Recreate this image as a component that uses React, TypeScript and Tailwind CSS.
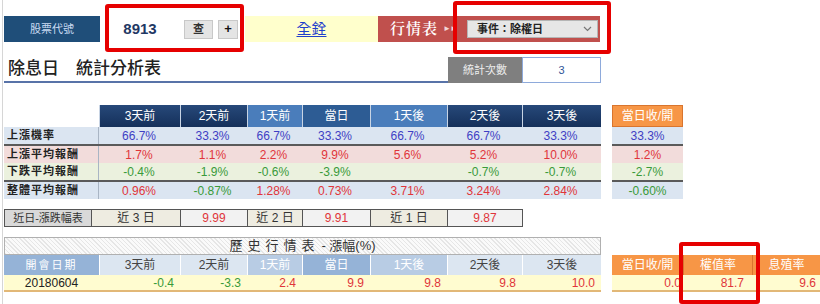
import React from "react";

const COLS = [81, 67, 55, 68, 77, 75, 79];
const HEADS = ["3天前", "2天前", "1天前", "當日", "1天後", "2天後", "3天後"];

const headBg = [
  "bg-gradient-to-b from-[#27497a] to-[#15305a]",
  "bg-gradient-to-b from-[#27497a] to-[#15305a]",
  "bg-[#4a7dbb]",
  "bg-[#2d5c94]",
  "bg-[#4a7dbb]",
  "bg-gradient-to-b from-[#27497a] to-[#15305a]",
  "bg-gradient-to-b from-[#27497a] to-[#15305a]",
];

const BLUE = "text-[#3f3fc4]";
const RED = "text-[#e0353a]";
const GREEN = "text-[#3a9a3a]";

type Row = {
  label: string;
  bg: string;
  border: string;
  values: [string, string][];
  side: [string, string];
};

const rows: Row[] = [
  {
    label: "上漲機率",
    bg: "bg-[#dbe5f1]",
    border: "border-b-2 border-[#5a5a5a]",
    values: [
      ["66.7%", BLUE], ["33.3%", BLUE], ["66.7%", BLUE], ["33.3%", BLUE],
      ["66.7%", BLUE], ["66.7%", BLUE], ["33.3%", BLUE],
    ],
    side: ["33.3%", BLUE],
  },
  {
    label: "上漲平均報酬",
    bg: "bg-[#f2dcdb]",
    border: "",
    values: [
      ["1.7%", RED], ["1.1%", RED], ["2.2%", RED], ["9.9%", RED],
      ["5.6%", RED], ["5.2%", RED], ["10.0%", RED],
    ],
    side: ["1.2%", RED],
  },
  {
    label: "下跌平均報酬",
    bg: "bg-[#ebf1de]",
    border: "border-b-2 border-[#5a5a5a]",
    values: [
      ["-0.4%", GREEN], ["-1.9%", GREEN], ["-0.6%", GREEN], ["-3.9%", GREEN],
      ["", GREEN], ["-0.7%", GREEN], ["-0.7%", GREEN],
    ],
    side: ["-2.7%", GREEN],
  },
  {
    label: "整體平均報酬",
    bg: "bg-[#dbe5f1]",
    border: "",
    values: [
      ["0.96%", RED], ["-0.87%", GREEN], ["1.28%", RED], ["0.73%", RED],
      ["3.71%", RED], ["3.24%", RED], ["2.84%", RED],
    ],
    side: ["-0.60%", GREEN],
  },
];

const histHead = [
  { t: "3天前", c: "bg-[#dce6f1] text-[#444]" },
  { t: "2天前", c: "bg-[#dce6f1] text-[#444]" },
  { t: "1天前", c: "bg-[#b8cce4] text-white" },
  { t: "當日", c: "bg-[#95b3d7] text-white" },
  { t: "1天後", c: "bg-[#b8cce4] text-white" },
  { t: "2天後", c: "bg-[#dce6f1] text-[#444]" },
  { t: "3天後", c: "bg-[#dce6f1] text-[#444]" },
];
const histVals: [string, string][] = [
  ["-0.4", GREEN], ["-3.3", GREEN], ["2.4", RED], ["9.9", RED],
  ["9.8", RED], ["9.8", RED], ["10.0", RED],
];

function Chevron() {
  return (
    <svg width="9" height="6" viewBox="0 0 9 6" fill="none">
      <path d="M1 1l3.5 3.5L8 1" stroke="#777" strokeWidth="1.2" />
    </svg>
  );
}

export default function App() {
  return (
    <div className="relative w-[820px] h-[304px] overflow-hidden bg-white font-['Liberation_Sans','Noto_Sans_CJK_TC',sans-serif]">
      <div className="ml-[2px] h-full border-l border-[#d6d6d6] pl-[1px] pt-[16px]">
        {/* Top bar */}
        <div className="flex h-[26px]">
          <div className="flex w-[96px] items-center justify-center bg-[#1f4e79] text-[11px] text-[#c9dbf2]">
            股票代號
          </div>
          <div className="flex w-[145px] items-center bg-white">
            <div className="w-[80px] text-center text-[15px] font-bold text-[#1f3864]">8913</div>
            <div className="ml-[4px] flex h-[19px] w-[29px] items-center justify-center border border-[#c8c8c8] bg-[#e4e4e4] text-[11px] font-bold text-[#333]">
              查
            </div>
            <div className="ml-[5px] flex h-[19px] w-[20px] items-center justify-center border border-[#c8c8c8] bg-[#e4e4e4] text-[13px] font-bold text-[#111]">
              +
            </div>
          </div>
          <div className="flex w-[133px] items-center justify-center bg-[#ffffcc] text-[15px] text-[#1f3fcc] underline underline-offset-2">
            全銓
          </div>
          <div className="flex w-[222px] items-center bg-[#c0504d]">
            <div className="flex w-[89px] items-center pl-[12px] text-white">
              <span className="font-['Liberation_Serif','Noto_Serif_CJK_TC','Noto_Sans_CJK_TC',serif] text-[15px] font-semibold tracking-[1px]">
                行情表
              </span>
              <span className="ml-[5px] text-[8px] tracking-[-1px] text-[#f3d6d6]">►►</span>
            </div>
            <div className="flex h-[18px] w-[131px] items-center justify-between border border-[#b5b5b5] bg-[#e6e6e6] pl-[9px] pr-[5px] text-[11px] font-bold text-[#222]">
              <span>事件：除權日</span>
              <Chevron />
            </div>
          </div>
        </div>

        {/* Title row */}
        <div className="mt-[15px] flex h-[26px] w-[597px]">
          <div className="flex flex-1 items-center border-b-2 border-[#5873a8] pl-[4px] text-[17px] font-medium text-[#222]">
            除息日　統計分析表
          </div>
          <div className="flex w-[74px] items-center justify-center bg-[#7f7f7f] text-[11px] text-[#eeeeee]">
            統計次數
          </div>
          <div className="flex w-[79px] items-center justify-center border border-[#8eaadb] text-[11px] text-[#2f5597]">
            3
          </div>
        </div>

        {/* Stats table */}
        <div className="mt-[22px] flex">
          <div className="w-[597px]">
            <div className="flex h-[22px]">
              <div className="w-[95px]" />
              {HEADS.map((h, i) => (
                <div
                  key={h}
                  style={{ width: COLS[i] }}
                  className={`flex items-center justify-center border-l border-[#c8d4e4] text-[12px] text-white ${headBg[i]}`}
                >
                  {h}
                </div>
              ))}
            </div>
            {rows.map((r) => (
              <div key={r.label} className={`flex h-[17px] box-content ${r.bg} ${r.border}`}>
                <div className="flex w-[95px] items-center border-r border-[#a9b5c4] pl-[3px] text-[11px] font-semibold tracking-[1px] text-[#222]">
                  {r.label}
                </div>
                {r.values.map(([v, c], i) => (
                  <div
                    key={i}
                    style={{ width: COLS[i] - (i === 0 ? 1 : 0) }}
                    className={`flex items-center justify-center text-[12px] ${c}`}
                  >
                    {v}
                  </div>
                ))}
              </div>
            ))}
          </div>
          <div className="ml-[11px] w-[71px]">
            <div className="flex h-[22px] items-center justify-center border border-[#d9752e] bg-[#f79646] text-[12px] text-white">
              當日收/開
            </div>
            {rows.map((r) => (
              <div
                key={r.label}
                className={`flex h-[17px] box-content items-center justify-center text-[12px] ${r.bg} ${r.border} ${r.side[1]}`}
              >
                {r.side[0]}
              </div>
            ))}
          </div>
        </div>

        {/* Recent change row */}
        <div className="mt-[10px] flex h-[18px] w-[519px] border border-[#555] text-[12px]">
          <div className="flex w-[87px] items-center justify-center border-r border-[#555] bg-[#d9d9d9] text-[11px] text-[#333]">
            近日-漲跌幅表
          </div>
          <div className="flex w-[89px] items-center justify-center border-r border-[#555] bg-[#eeece1] text-[#333]">
            近 3 日
          </div>
          <div className="flex w-[67px] items-center justify-center border-r border-[#555] bg-[#f2f2f2] text-[#e0353a]">
            9.99
          </div>
          <div className="flex w-[55px] items-center justify-center border-r border-[#555] bg-[#eeece1] text-[#333]">
            近 2 日
          </div>
          <div className="flex w-[68px] items-center justify-center border-r border-[#555] bg-[#f2f2f2] text-[#e0353a]">
            9.91
          </div>
          <div className="flex w-[77px] items-center justify-center border-r border-[#555] bg-[#eeece1] text-[#333]">
            近 1 日
          </div>
          <div className="flex flex-1 items-center justify-center bg-[#f2f2f2] text-[#e0353a]">
            9.87
          </div>
        </div>

        {/* History table */}
        <div className="mt-[10px] flex">
          <div className="w-[597px]">
            <div className="flex h-[18px] items-center justify-center border border-[#b0b0b0] bg-[repeating-linear-gradient(45deg,#e6e6e6_0px,#e6e6e6_1px,#fafafa_1px,#fafafa_3px)] text-[13px] text-[#333]">
              <span className="tracking-[5px]">歷史行情表</span>
              <span className="ml-[2px]">- 漲幅(%)</span>
            </div>
            <div className="flex h-[20px] text-[12px]">
              <div className="flex w-[95px] items-center justify-center bg-[#95b3d7] text-[11px] tracking-[2px] text-white">
                開會日期
              </div>
              {histHead.map((h, i) => (
                <div
                  key={h.t}
                  style={{ width: COLS[i] }}
                  className={`flex items-center justify-center border-l border-white ${h.c}`}
                >
                  {h.t}
                </div>
              ))}
            </div>
            <div className="flex h-[17px] border-b-2 border-[#e2b877] bg-[#fffcd0] text-[12px]">
              <div className="flex w-[95px] items-center justify-center text-[#222]">20180604</div>
              {histVals.map(([v, c], i) => (
                <div
                  key={i}
                  style={{ width: COLS[i] }}
                  className={`flex items-center justify-end pr-[6px] ${c}`}
                >
                  {v}
                </div>
              ))}
            </div>
          </div>
          <div className="ml-[11px] mt-[18px] w-[208px]">
            <div className="flex h-[20px] bg-[#f79646] text-[12px] text-white">
              <div className="flex w-[71px] items-center justify-center">當日收/開</div>
              <div className="flex w-[69px] items-center justify-center border-l border-[#d9752e]">權值率</div>
              <div className="flex flex-1 items-center justify-center border-l border-[#d9752e]">息殖率</div>
            </div>
            <div className="flex h-[17px] border-b-2 border-[#e2b877] bg-[#fffcd0] text-[12px] text-[#e0353a]">
              <div className="flex w-[71px] items-center justify-end pr-[2px]">0.0</div>
              <div className="flex w-[69px] items-center justify-end pr-[8px]">81.7</div>
              <div className="flex flex-1 items-center justify-end pr-[4px]">9.6</div>
            </div>
          </div>
        </div>
      </div>

      {/* Red annotation boxes */}
      <div className="absolute left-[105px] top-[4px] h-[48px] w-[139px] rounded-[3px] border-4 border-[#e60000]" />
      <div className="absolute left-[453px] top-[1px] h-[53px] w-[158px] rounded-[3px] border-4 border-[#e60000]" />
      <div className="absolute left-[679px] top-[242px] h-[62px] w-[81px] rounded-[3px] border-4 border-[#e60000]" />
    </div>
  );
}
